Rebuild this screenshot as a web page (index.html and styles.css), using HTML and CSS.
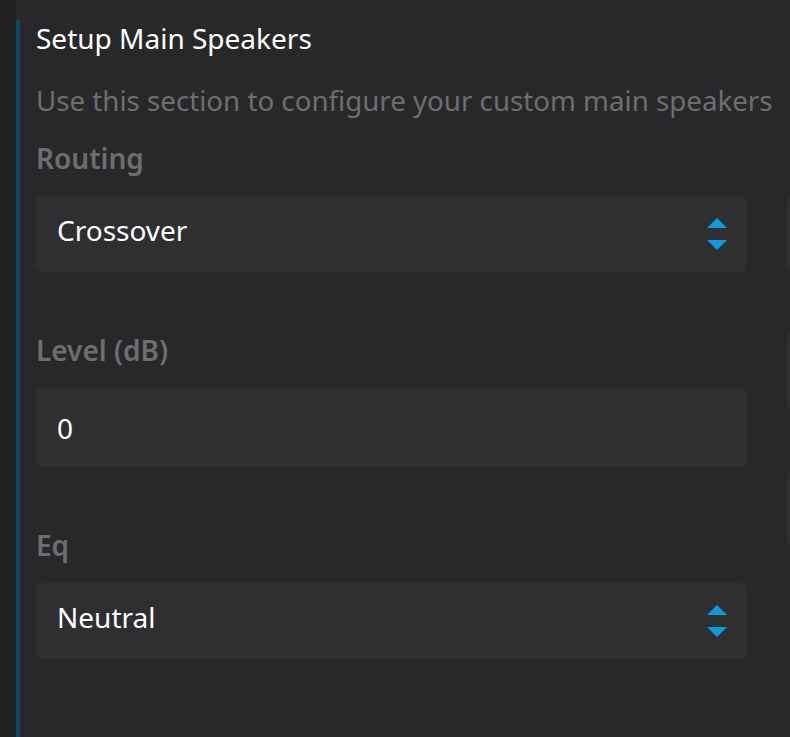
FILE: index.html
```html
<!DOCTYPE html>
<html lang="en">

<head>
    <meta charset="UTF-8">
    <meta name="viewport" content="width=device-width, initial-scale=1.0">
    <title>Setup Main Speakers</title>
    <link rel="stylesheet" href="styles.css">
</head>

<body>
    <div class="layout">
        <div class="sidebar"></div>

        <div class="columns">
            <section class="speaker-section">
                <h2 class="section-title">Setup Main Speakers</h2>
                <p class="section-desc">Use this section to configure your custom main speakers</p>

                <div class="field">
                    <label class="field-label">Routing</label>
                    <div class="control select">
                        <span>Crossover</span>
                        <span class="arrows">
                            <svg width="20" height="32" viewBox="0 0 20 32">
                                <path d="M10 0 L20 10 L0 10 Z" fill="#0d9be0" />
                                <path d="M0 22 L20 22 L10 32 Z" fill="#0d9be0" />
                            </svg>
                        </span>
                    </div>
                </div>

                <div class="field">
                    <label class="field-label">Level (dB)</label>
                    <div class="control input">
                        <span>0</span>
                    </div>
                </div>

                <div class="field">
                    <label class="field-label">Eq</label>
                    <div class="control select">
                        <span>Neutral</span>
                        <span class="arrows">
                            <svg width="20" height="32" viewBox="0 0 20 32">
                                <path d="M10 0 L20 10 L0 10 Z" fill="#0d9be0" />
                                <path d="M0 22 L20 22 L10 32 Z" fill="#0d9be0" />
                            </svg>
                        </span>
                    </div>
                </div>
            </section>

            <!-- next column, only its edge is on screen -->
            <section class="speaker-section next">
                <div class="field">
                    <div class="control select"></div>
                </div>
                <div class="field">
                    <div class="control input"></div>
                </div>
                <div class="field">
                    <div class="control select"></div>
                </div>
            </section>
        </div>
    </div>
</body>

</html>
```

FILE: styles.css
```css
* {
    box-sizing: border-box;
}

body {
    margin: 0;
    background-color: #28282a;
    font-family: "Noto Sans", "Open Sans", sans-serif;
    overflow: hidden;
}

.layout {
    display: flex;
    min-height: 737px;
}

.sidebar {
    flex: 0 0 16px;
    background-color: #222224;
}

.columns {
    display: flex;
    padding-top: 20px;
}

.speaker-section {
    flex: 0 0 771px;
    min-width: 0;
    border-left: 4px solid #0b4a64;
    padding: 0 40px 0 16px;
}

.speaker-section.next {
    border-left: none;
    padding: 156px 0 0 0;
}

.section-title {
    margin: 0;
    font-size: 28px;
    font-weight: 400;
    line-height: 36px;
    color: #ffffff;
}

.section-desc {
    margin: 24px 0 0;
    font-size: 27.7px;
    line-height: 40px;
    color: #6e6e70;
    white-space: nowrap;
}

.field {
    margin-top: 20px;
}

.field + .field {
    margin-top: 60px;
}

.field-label {
    display: block;
    font-size: 28px;
    font-weight: 600;
    line-height: 36px;
    color: #6e6e70;
    margin-bottom: 20px;
}

.control {
    display: flex;
    align-items: center;
    justify-content: space-between;
    height: 76px;
    padding: 0 20px 0 21px;
    background-color: #2f2f31;
    border-radius: 6px;
    font-size: 28px;
    color: #ffffff;
}

.control.select {
    padding-bottom: 8px;
}

.control.select .arrows {
    margin-top: 8px;
}

.control.input {
    height: 79px;
}

.arrows {
    display: flex;
}
```
